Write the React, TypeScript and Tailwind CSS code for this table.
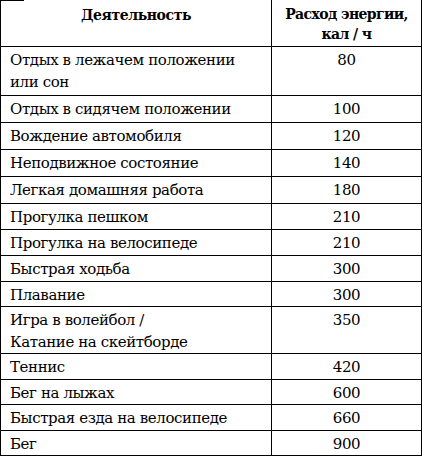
const rows: { name: string[]; value: string; h: string }[] = [
  { name: ["Отдых в лежачем положении", "или сон"], value: "80", h: "h-[49px]" },
  { name: ["Отдых в сидячем положении"], value: "100", h: "h-[27px]" },
  { name: ["Вождение автомобиля"], value: "120", h: "h-[27px]" },
  { name: ["Неподвижное состояние"], value: "140", h: "h-[27px]" },
  { name: ["Легкая домашняя работа"], value: "180", h: "h-[27px]" },
  { name: ["Прогулка пешком"], value: "210", h: "h-[26px]" },
  { name: ["Прогулка на велосипеде"], value: "210", h: "h-[26px]" },
  { name: ["Быстрая ходьба"], value: "300", h: "h-[26px]" },
  { name: ["Плавание"], value: "300", h: "h-[25px]" },
  { name: ["Игра в волейбол /", "Катание на скейтборде"], value: "350", h: "h-[47px]" },
  { name: ["Теннис"], value: "420", h: "h-[26px]" },
  { name: ["Бег на лыжах"], value: "600", h: "h-[25px]" },
  { name: ["Быстрая езда на велосипеде"], value: "660", h: "h-[26px]" },
  { name: ["Бег"], value: "900", h: "h-[24px]" },
];

const serif = "font-['DejaVu_Serif',serif]";

export default function App() {
  return (
    <div className="w-[422px] h-[456px] bg-white text-black relative">
      {/* small leftover piece of the top rule */}
      <div className="absolute left-0 top-0 w-[24px] h-px bg-black" />
      <table className="w-[422px] table-fixed border-collapse border-l border-r border-b border-black font-['DejaVu_Serif',serif] text-[15px] leading-[22px] tracking-[-0.4px] text-black">
        <colgroup>
          <col className="w-[271px]" />
          <col />
        </colgroup>
        <thead>
          <tr className="h-[46px] border-b border-black">
            <th className="border-r border-black font-['DejaVu_Serif',serif] text-[14px] tracking-[-0.4px] font-bold text-center align-top pt-[4px]">
              Деятельность
            </th>
            <th className="font-['DejaVu_Serif',serif] text-[14px] tracking-[-0.6px] font-bold text-center align-top pt-[4px] leading-[20px] whitespace-nowrap">
              Расход энергии,
              <br />
              кал / ч
            </th>
          </tr>
        </thead>
        <tbody>
          {rows.map((r, i) => (
            <tr key={i} className={`${r.h} border-b border-black`}>
              <td className={`${serif} border-r border-black align-top pl-[9px] pt-[2px] p-0`}>
                {r.name.map((n, j) => (
                  <div key={j}>{n}</div>
                ))}
              </td>
              <td className={`${serif} align-top text-center pt-[2px] p-0`}>{r.value}</td>
            </tr>
          ))}
        </tbody>
      </table>
    </div>
  );
}
